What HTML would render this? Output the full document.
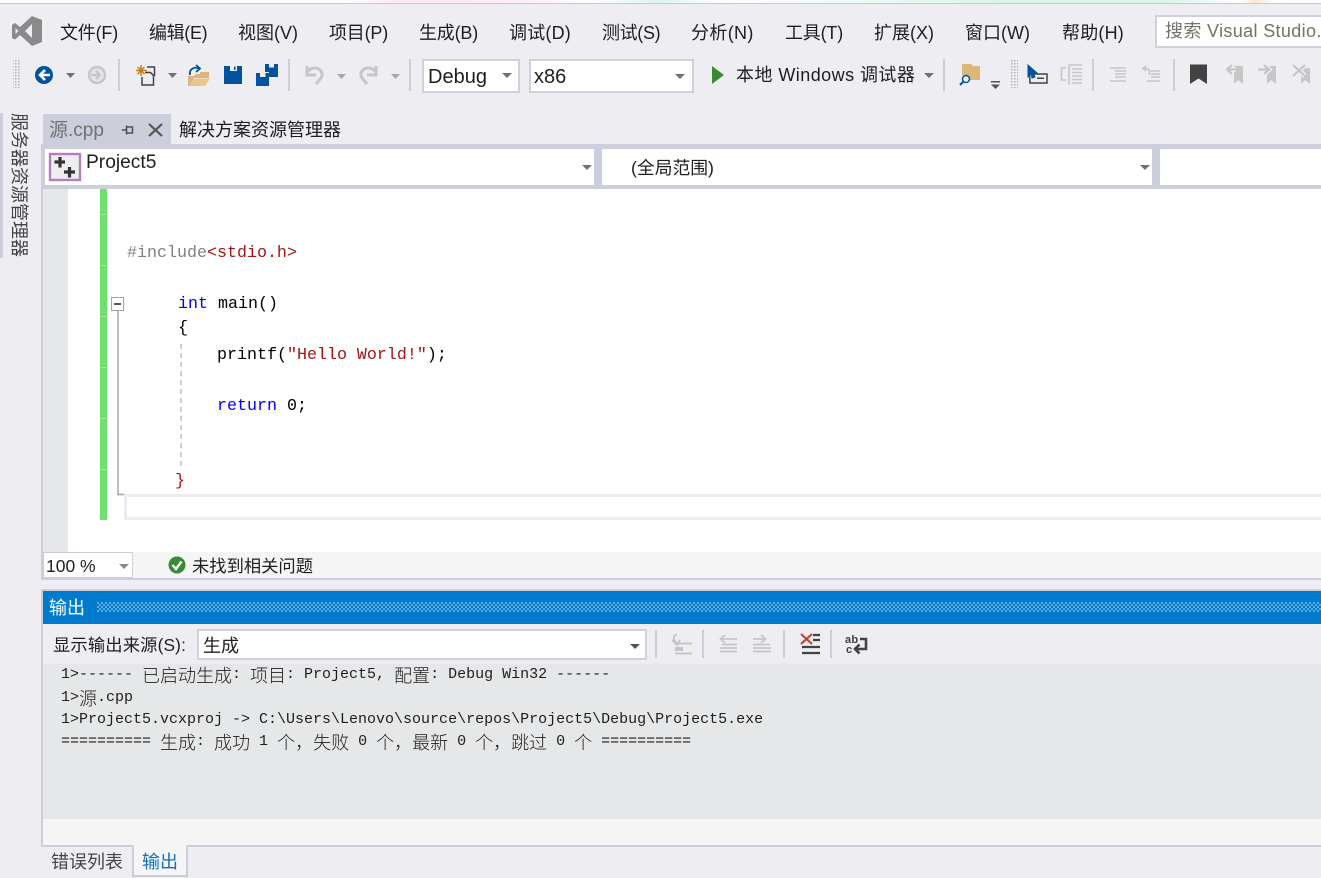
<!DOCTYPE html>
<html lang="zh-CN"><head><meta charset="utf-8"><title>Visual Studio</title>
<style>
html,body{margin:0;padding:0;width:1321px;height:878px;overflow:hidden;background:#eeeef2}
body{position:relative;font-family:"Liberation Sans","Noto Sans CJK SC",sans-serif;color:#1e1e1e}
.a{position:absolute}
.t{position:absolute;white-space:nowrap;font-size:18px;line-height:26px;height:26px}
.m{position:absolute;white-space:pre;font-family:"Liberation Mono","Noto Sans CJK SC",monospace;font-size:16.67px;line-height:24px;height:24px;color:#000}
.o{position:absolute;left:61px;white-space:pre;font-family:"Liberation Mono","Noto Sans CJK SC",monospace;font-size:15px;line-height:22px;height:22px;color:#1e1e1e}
.o span{font-family:"Noto Sans CJK SC",sans-serif;font-size:18px;font-weight:300;display:inline-block;width:18px;text-align:center;line-height:22px;height:22px;vertical-align:top}
.k{color:#0000ff}.s{color:#a31515}.g{color:#808080}
.box{position:absolute;background:#fff;border:2.500px solid #cfd1dd;box-sizing:border-box}
svg{position:absolute;left:0;top:0}
</style></head><body>

<div class="a" style="left:0;top:0;width:1321px;height:3px;background:linear-gradient(90deg,#fff 0,#fff 340px,#fbeaf4 400px,#fdf0f6 530px,#fff 590px,#dff3ee 660px,#fff 720px,#dcf5ea 1000px,#dcf5ea 1170px,#fff 1240px,#fbe5d8 1255px,#fff 1275px)"></div>
<div class="a" style="left:0;top:3px;width:1321px;height:1px;background:#c9c9c9"></div>

<!-- menu -->
<div class="t" style="left:60px;top:20px;letter-spacing:-.2px">文件(F)</div>
<div class="t" style="left:149px;top:20px;letter-spacing:-.35px">编辑(E)</div>
<div class="t" style="left:238px;top:20px">视图(V)</div>
<div class="t" style="left:329px;top:20px;letter-spacing:-.2px">项目(P)</div>
<div class="t" style="left:419px;top:20px;letter-spacing:-.2px">生成(B)</div>
<div class="t" style="left:509px;top:20px;letter-spacing:.2px">调试(D)</div>
<div class="t" style="left:602px;top:20px;letter-spacing:-.35px">测试(S)</div>
<div class="t" style="left:691px;top:20px;letter-spacing:.35px">分析(N)</div>
<div class="t" style="left:785px;top:20px;letter-spacing:-.2px">工具(T)</div>
<div class="t" style="left:874px;top:20px">扩展(X)</div>
<div class="t" style="left:965px;top:20px">窗口(W)</div>
<div class="t" style="left:1062px;top:20px;letter-spacing:.2px">帮助(H)</div>
<div class="box" style="left:1155px;top:15px;width:180px;height:33px"></div>
<div class="t" style="left:1165px;top:18px;color:#717171;letter-spacing:.35px">搜索 Visual Studio.</div>

<!-- toolbar combos -->
<div class="box" style="left:422px;top:59px;width:98px;height:34px"></div>
<div class="t" style="left:428px;top:64px;font-size:20px">Debug</div>
<div class="box" style="left:529px;top:59px;width:165px;height:34px"></div>
<div class="t" style="left:534px;top:64px;font-size:20px">x86</div>
<div class="t" style="left:736px;top:62px;letter-spacing:.45px">本地 Windows 调试器</div>

<!-- side -->
<div class="a" style="left:0;top:113px;width:3px;height:145px;background:#cccedb"></div>
<div class="a" style="left:7px;top:113px;width:24px;height:150px;writing-mode:vertical-rl;text-orientation:sideways;font-size:18px;line-height:24px;color:#444;white-space:nowrap">服务器资源管理器</div>

<!-- doc tabs -->
<div class="a" style="left:43px;top:114px;width:128px;height:31px;background:#cccedb"></div>
<div class="t" style="left:49px;top:118px;font-size:19px;color:#717171">源.cpp</div>
<div class="t" style="left:179px;top:117px">解决方案资源管理器</div>
<div class="a" style="left:41px;top:144px;width:1280px;height:5px;background:#cccedb"></div>

<!-- nav bar -->
<div class="a" style="left:41px;top:149px;width:1280px;height:40px;background:#cccedb"></div>
<div class="a" style="left:45px;top:149px;width:549px;height:36px;background:#fff"></div>
<div class="a" style="left:602px;top:149px;width:550px;height:36px;background:#fff"></div>
<div class="a" style="left:1160px;top:149px;width:161px;height:36px;background:#fff"></div>
<div class="t" style="left:86px;top:150px;font-size:19.2px">Project5</div>
<div class="t" style="left:631px;top:155px;font-size:17.8px">(全局范围)</div>

<!-- editor -->
<div class="a" style="left:41px;top:185px;width:2px;height:395px;background:#cccedb"></div>
<div class="a" style="left:43px;top:189px;width:1278px;height:363px;background:#fff"></div>
<div class="a" style="left:43px;top:189px;width:25px;height:363px;background:#e6e7e8"></div>
<div class="a" style="left:100px;top:189px;width:7px;height:331px;background:#6fdf6f"></div>
<div class="a" style="left:124px;top:494px;width:1197px;height:26px;box-sizing:border-box;border:3px solid #ebebf3;border-right:0"></div>

<div class="m g" style="left:127px;top:242px">#include<span class="s">&lt;stdio.h&gt;</span></div>
<div class="m" style="left:178px;top:293px"><span class="k">int</span> main()</div>
<div class="m" style="left:178px;top:317px">{</div>
<div class="m" style="left:217px;top:344px">printf(<span class="s">"Hello World!"</span>);</div>
<div class="m" style="left:217px;top:395px"><span class="k">return</span> 0;</div>
<div class="m s" style="left:175px;top:470px">}</div>

<!-- status -->
<div class="a" style="left:43px;top:552px;width:1278px;height:26px;background:#f5f5f5"></div>
<div class="a" style="left:41px;top:578px;width:1280px;height:2px;background:#cccedb"></div>
<div class="a" style="left:43px;top:552px;width:90px;height:26px;box-sizing:border-box;background:#fff;border:1px solid #cccedb"></div>
<div class="t" style="left:46px;top:553px;font-size:17.5px">100 %</div>
<div class="t" style="left:192px;top:553px;font-size:17.3px">未找到相关问题</div>

<!-- output panel -->
<div class="a" style="left:41px;top:590px;width:2px;height:257px;background:#cccedb"></div>
<div class="a" style="left:41px;top:589px;width:1280px;height:2px;background:#cccedb"></div>
<div class="a" style="left:43px;top:591px;width:1278px;height:33px;background:#007acc"></div>
<div class="a" style="left:97px;top:602px;width:1224px;height:10px;background-image:radial-gradient(circle at 1px 1px,#66aede 1px,transparent 1.2px),radial-gradient(circle at 3px 3px,#66aede 1px,transparent 1.2px);background-size:4px 4px"></div>
<div class="t" style="left:49px;top:595px;color:#fff">输出</div>
<div class="t" style="left:53px;top:632px;font-size:17.3px;letter-spacing:.15px">显示输出来源(S):</div>
<div class="box" style="left:197px;top:629px;width:450px;height:31px"></div>
<div class="t" style="left:203px;top:633px">生成</div>
<div class="a" style="left:43px;top:664px;width:1278px;height:155px;background:#e6e7e8"></div>
<div class="a" style="left:43px;top:819px;width:1278px;height:26px;background:#f5f5f5"></div>
<div class="a" style="left:41px;top:845px;width:1280px;height:2px;background:#cccedb"></div>

<div class="o" style="top:664px">1&gt;------ <span>已</span><span>启</span><span>动</span><span>生</span><span>成</span>: <span>项</span><span>目</span>: Project5, <span>配</span><span>置</span>: Debug Win32 ------</div>
<div class="o" style="top:687px">1&gt;<span>源</span>.cpp</div>
<div class="o" style="top:709px">1&gt;Project5.vcxproj -&gt; C:\Users\Lenovo\source\repos\Project5\Debug\Project5.exe</div>
<div class="o" style="top:731px">========== <span>生</span><span>成</span>: <span>成</span><span>功</span> 1 <span>个</span><span>，</span><span>失</span><span>败</span> 0 <span>个</span><span>，</span><span>最</span><span>新</span> 0 <span>个</span><span>，</span><span>跳</span><span>过</span> 0 <span>个</span> ==========</div>

<!-- bottom tabs -->
<div class="t" style="left:51px;top:849px;color:#444">错误列表</div>
<div class="a" style="left:132px;top:845px;width:56px;height:32px;box-sizing:border-box;background:#f5f5f5;border:2px solid #cccedb;border-top:0"></div>
<div class="t" style="left:142px;top:849px;color:#0e70c0">输出</div>

<svg width="1321" height="878" viewBox="0 0 1321 878" fill="none">
<defs>
<pattern id="gr2" width="3" height="3" patternUnits="userSpaceOnUse"><rect width="1.500" height="1.500" fill="#b3b3b3"/></pattern>
</defs>
<!-- VS logo -->
<path fill-rule="evenodd" fill="#8a8a8a" d="M42 20L32 16L20 27L15 23L12 25V38L15 39.500L20 35L32 46L42 42ZM15.500 28L18.500 31L15.500 34ZM32 24V38L25 31Z"/>

<!-- grips -->
<rect x="13" y="60" width="8" height="28" fill="url(#gr2)"/>
<rect x="1010" y="60" width="8" height="28" fill="url(#gr2)"/>

<!-- separators -->
<g fill="#cccedb">
<rect x="118" y="59" width="2" height="32"/><rect x="288" y="59" width="2" height="32"/><rect x="409" y="59" width="2" height="32"/><rect x="943" y="59" width="2" height="32"/><rect x="1092" y="59" width="2" height="32"/><rect x="1173" y="59" width="2" height="32"/>
<rect x="655" y="630" width="2" height="28"/><rect x="702" y="630" width="2" height="28"/><rect x="783" y="630" width="2" height="28"/><rect x="830" y="630" width="2" height="28"/>
</g>

<!-- back / forward -->
<circle cx="44" cy="75" r="9" fill="#00539c"/>
<path d="M45 70L40 75L45 80M40 75H50" stroke="#fff" stroke-width="2.600"/>
<circle cx="97" cy="75" r="8" fill="#e4e4e8" stroke="#c6c6c6" stroke-width="2.400"/>
<path d="M96 71L100 75L96 79M100 75H91" stroke="#c6c6c6" stroke-width="2.200"/>

<!-- small arrows -->
<g fill="#717171">
<path d="M66 73h9l-4.500 5z"/><path d="M168 73h9l-4.500 5z"/><path d="M337 74h9l-4.500 5z" fill="#a8a8a8"/><path d="M391 74h9l-4.500 5z" fill="#a8a8a8"/>
<path d="M502 73h10l-5 5z"/><path d="M675 74h10l-5 5z"/><path d="M924 73h10l-5 5z"/>
<path d="M582 165h10l-5 5z"/><path d="M1140 165h10l-5 5z"/><path d="M119 564h10l-5 5z" fill="#888"/><path d="M630 644h10l-5 5z" fill="#555"/>
<rect x="991" y="81" width="9" height="1.500" fill="#555"/><path d="M991 84.500h9l-4.500 4.500z" fill="#555"/>
</g>

<!-- new item -->
<path d="M141 65V76M136 70.500H147M137.500 67L144.500 74M144.500 67L137.500 74" stroke="#c27d1a" stroke-width="1.500"/>
<path d="M147 67H154.500V76M145 72.500H150.500L153.500 75.500V85H142V77" stroke="#424242" stroke-width="1.500"/>

<!-- open folder -->
<path d="M188 86V76H194L196 74H200V72H209V78H194L190 86Z" fill="#dcb67a"/>
<path d="M190 86L194 78.500H210L205 86Z" fill="#e8c68f"/>
<path d="M190 75C189 69 194 66.500 199 68.500M196 65L200 68.500L196 72" stroke="#00539c" stroke-width="1.800"/>

<!-- save -->
<path d="M224 66H242V84H224Z" fill="#00539c"/>
<rect x="230" y="66" width="7" height="5" fill="#e9edf4"/><rect x="234" y="66.500" width="1.500" height="3.500" fill="#00539c"/>
<!-- save all -->
<path d="M265 64H278V77H269V72H265Z" fill="#00539c"/><rect x="269" y="64" width="5" height="3.500" fill="#e9edf4"/>
<path d="M256 73H269V86H256Z" fill="#00539c"/><rect x="260" y="73" width="5.500" height="4" fill="#e9edf4"/>

<!-- undo redo -->
<path d="M316 84L321 78C324 73 320 68 315 68C312 68 310 69 308 71M307 66V75H316" stroke="#c6c6c6" stroke-width="3"/>
<path d="M367 84L362 78C359 73 363 68 368 68C371 68 373 69 375 71M376 66V75H367" stroke="#c6c6c6" stroke-width="3"/>

<!-- play -->
<path d="M712 66L724 75L712 84Z" fill="#388a34"/>

<!-- folder search -->
<path d="M962 81V64H971L973 66H980V80H970C970 78 968 75 965 75C964 75 963 75 962 76Z" fill="#dcb67a"/>
<circle cx="966" cy="79" r="3.500" stroke="#00539c" stroke-width="1.500"/>
<path d="M963.500 81.500L960 85" stroke="#00539c" stroke-width="2"/>

<!-- cursor + box -->
<path d="M1029.500 74H1047V83H1030Z" stroke="#424242" stroke-width="1.500"/>
<rect x="1037" y="77.500" width="7" height="1.500" fill="#424242"/>
<path d="M1028 65L1037 73L1033 73L1035 77L1032 78L1031 74L1028 77Z" fill="#00539c" stroke="#00539c"/>

<!-- disabled -->
<g stroke="#c6c6c6" stroke-width="1.600">
<path d="M1066 68H1061.500V80H1066M1069 85V65H1082M1072 69H1082M1072 72.500H1082M1072 76H1082M1072 79.500H1082M1072 83H1082"/>
<path d="M1110 68H1126M1115 71H1126M1115 74H1126M1115 77H1126M1110 81H1126"/>
<path d="M1149 75C1151 70 1148 67.500 1143 68.500M1146 66L1143 68.500L1146 71M1151 71H1160M1151 74H1160M1151 77H1160M1147 81H1160"/>
</g>

<!-- bookmarks -->
<path d="M1190 64.500H1207V84L1198.500 78.500L1190 84Z" fill="#424242"/>
<g fill="#c6c6c6">
<path d="M1234 66H1243V84L1238 80L1234 84Z"/><path d="M1267 66H1276V84L1271 80L1267 84Z"/><path d="M1301 68H1310V84L1305 80L1301 84Z"/>
</g>
<g stroke="#c6c6c6" stroke-width="2.200">
<path d="M1232 65L1227 69.500L1232 74M1227 69.500H1236" stroke="#eeeef2" stroke-width="5"/>
<path d="M1232 65L1227 69.500L1232 74M1227 69.500H1236"/>
<path d="M1264 65L1269 69.500L1264 74M1269 69.500H1258" stroke="#eeeef2" stroke-width="5"/>
<path d="M1264 65L1269 69.500L1264 74M1269 69.500H1258"/>
<path d="M1293 65L1305 76M1305 65L1293 76" stroke="#eeeef2" stroke-width="5"/>
<path d="M1293 65L1305 76M1305 65L1293 76"/>
</g>

<!-- pin, close -->
<path d="M122 130H126M126.500 125.500V134.500M126.500 127H132.500V133H126.500" stroke="#505050" stroke-width="1.500"/>
<path d="M149 124L162 136M162 124L149 136" stroke="#555" stroke-width="2.200"/>

<!-- nav icon -->
<rect x="50" y="154" width="30" height="26" fill="#eeeeee" stroke="#b27fb9" stroke-width="2.400"/>
<path d="M54.500 162H65M60 157V167.500M64 172H75M69.500 167V177.500" stroke="#333" stroke-width="3.200"/>

<!-- green ticks -->
<g fill="#9ae89a"><rect x="100" y="214" width="7" height="1"/><rect x="100" y="265" width="7" height="1"/><rect x="100" y="316" width="7" height="1"/><rect x="100" y="367" width="7" height="1"/><rect x="100" y="418" width="7" height="1"/><rect x="100" y="469" width="7" height="1"/></g>

<!-- fold -->
<rect x="111.500" y="297.500" width="12" height="13" fill="#fff" stroke="#a5a5a5"/>
<path d="M114 304H121" stroke="#222" stroke-width="1.500"/>
<path d="M118 311V494.500H124" stroke="#a5a5a5" stroke-width="1.500"/>
<path d="M181 344V466" stroke="#c0c0c0" stroke-width="1.500" stroke-dasharray="5 4"/>

<!-- check -->
<circle cx="177" cy="565" r="8.500" fill="#388a34"/>
<path d="M172.500 565L176 569L181.500 561.500" stroke="#fff" stroke-width="2.400"/>

<!-- output toolbar -->
<g stroke="#c6c6c6">
<path d="M679 644C673 641 672 636 677 634.500M672 640L677 645L680 640" stroke-width="1.800"/>
<path d="M677 643.500H692M675 653.500H692" stroke-width="2"/>
<rect x="675" y="647" width="8" height="4" fill="#c6c6c6" stroke="none"/>
<path d="M725 635L720.500 639L725 643M721 639H737M722 644.500H737M720 648H737M720 651.500H737" stroke-width="1.800"/>
<path d="M761 635L765.500 639L761 643M753 639H765M753 644.500H770M753 648H771M753 651.500H771" stroke-width="1.800"/>
</g>
<path d="M801 634L812 644M812 634L801 644" stroke="#c33a2e" stroke-width="2"/>
<path d="M813 635H820M813 640H820M802 647H820M802 653H820" stroke="#424242" stroke-width="2.200"/>
<path d="M860 639H866V649H855M859.500 644.500L855 649L859.500 653.500" stroke="#424242" stroke-width="2.600"/>
</svg>
<div class="a" style="left:845px;top:635px;font:bold 11px/11px 'Liberation Sans',sans-serif;color:#424242;letter-spacing:.2px">ab</div>
<div class="a" style="left:846px;top:645px;font:bold 11px/11px 'Liberation Sans',sans-serif;color:#424242">c</div>
</body></html>
